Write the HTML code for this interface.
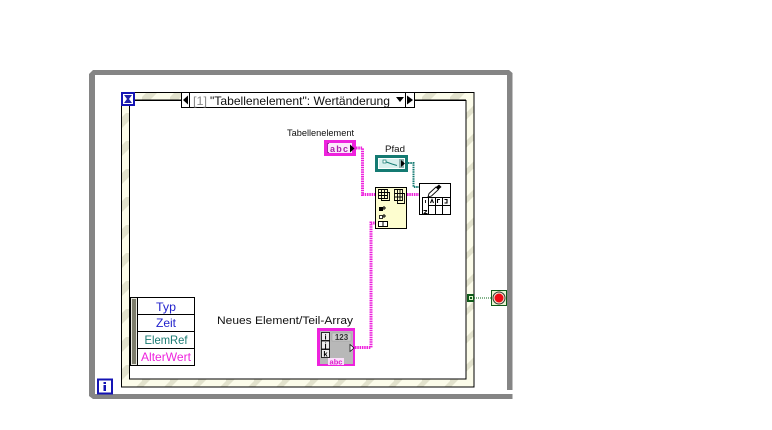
<!DOCTYPE html>
<html><head><meta charset="utf-8"><style>
html,body{margin:0;padding:0;background:#fff;width:772px;height:430px;overflow:hidden}
svg{display:block}
text{font-family:"Liberation Sans",sans-serif}
</style></head><body>
<svg width="772" height="430" viewBox="0 0 772 430" xmlns="http://www.w3.org/2000/svg">
<defs>
<pattern id="st" width="28" height="28" patternUnits="userSpaceOnUse" patternTransform="translate(2 1)">
<rect width="28" height="28" fill="#fcfcea"/>
<path d="M-4 16L16-4H27L-4 27ZM12 32L32 12V23L23 32Z" fill="#e2e2cc"/>
</pattern>
</defs>
<!-- while loop -->
<path d="M89 390V74L93 70H509L512.500 73V390H507V75H95V394H512.500V399H93L89 396Z" fill="#858585"/>
<!-- case frame -->
<rect x="121.500" y="92.500" width="352.500" height="294.500" fill="url(#st)" stroke="#000"/>
<rect x="129.500" y="100.500" width="336.500" height="278.500" fill="#fff" stroke="#000"/>
<!-- timeout -->
<rect x="121" y="92" width="14" height="14" fill="#1414b4"/>
<rect x="123" y="94" width="10" height="10" fill="#fff"/>
<path d="M124 95H132L129 99L132 103H124L127 99Z" fill="#2222aa"/>
<path d="M135 100H181" stroke="#000" fill="none"/>
<path d="M415 100H466" stroke="#000" fill="none"/>
<!-- selector -->
<rect x="181.500" y="92.500" width="233" height="15" fill="#fff" stroke="#000"/>
<path d="M189.500 92.500V107.500M405.500 92.500V107.500" stroke="#000"/>
<path d="M183 100L188 95.500V104.500Z" fill="#000"/>
<path d="M413 100L407 95.500V104.500Z" fill="#000"/>
<path d="M396 97H404L400 102Z" fill="#000"/>
<text x="193" y="105" font-size="12" fill="#8a8a8a" textLength="14" lengthAdjust="spacingAndGlyphs">[1]</text>
<text x="210" y="105" font-size="12" fill="#111" textLength="180" lengthAdjust="spacingAndGlyphs">"Tabellenelement": Wertänderung</text>
<!-- event data node -->
<rect x="130.500" y="297.500" width="64" height="68" fill="#fff" stroke="#000"/>
<rect x="131" y="298" width="6" height="67" fill="#e8e8e0"/>
<rect x="132" y="299" width="4" height="65" fill="#7d7d6c"/>
<path d="M137.500 297.500V365.500M137.500 314.500H194.500M137.500 331.500H194.500M137.500 348.500H194.500" stroke="#000" fill="none"/>
<text x="166" y="311" font-size="12" fill="#2222cc" text-anchor="middle" textLength="20" lengthAdjust="spacingAndGlyphs">Typ</text>
<text x="166" y="327" font-size="12" fill="#2222cc" text-anchor="middle" textLength="20" lengthAdjust="spacingAndGlyphs">Zeit</text>
<text x="166" y="344" font-size="12" fill="#1a7a72" text-anchor="middle" textLength="43" lengthAdjust="spacingAndGlyphs">ElemRef</text>
<text x="166" y="361" font-size="12" fill="#ee22dd" text-anchor="middle" textLength="50" lengthAdjust="spacingAndGlyphs">AlterWert</text>
<!-- iteration -->
<rect x="98" y="379.500" width="14" height="14" fill="#fff" stroke="#1414b4" stroke-width="2"/>
<rect x="103.500" y="382" width="2.500" height="2" fill="#1414b4"/>
<rect x="103.500" y="385" width="2.500" height="6" fill="#1414b4"/>
<!-- labels -->
<text x="287" y="136" font-size="9" fill="#111" textLength="67" lengthAdjust="spacingAndGlyphs">Tabellenelement</text>
<text x="385" y="152" font-size="9" fill="#111" textLength="20" lengthAdjust="spacingAndGlyphs">Pfad</text>
<text x="217" y="324" font-size="11" fill="#111" textLength="136" lengthAdjust="spacingAndGlyphs">Neues Element/Teil-Array</text>
<!-- wires -->
<path d="M356 148H362.500V194.500H375" fill="none" stroke="#ee22dd" stroke-width="3" stroke-dasharray="1.500 .8"/>
<path d="M407 194.500H419" fill="none" stroke="#ee22dd" stroke-width="3" stroke-dasharray="1.500 .8"/>
<path d="M355 347.500H371V223H376" fill="none" stroke="#ee22dd" stroke-width="3" stroke-dasharray="1.500 .8"/>
<path d="M408 163H413.500V187H419" fill="none" stroke="#147a72" stroke-width="2" stroke-dasharray="1.500 .8"/>
<path d="M474 298H491" fill="none" stroke="#0a6a1a" stroke-dasharray="1 1"/>
<!-- Tabellenelement control -->
<rect x="324" y="140" width="32" height="16" fill="#ee22dd"/>
<rect x="327" y="143" width="25" height="10" fill="#fbe8fb"/>
<text x="330" y="152" font-size="9" font-weight="bold" fill="#aa22aa" textLength="18">abc</text>
<path d="M329 143.500H327.500V152.500H329" fill="none" stroke="#aa22aa"/>
<path d="M350 144.500L354.500 148.500L350 152.500Z" fill="#000"/>
<!-- Pfad control -->
<rect x="375" y="155" width="33" height="17" fill="#147a72"/>
<rect x="378" y="158" width="27" height="11" fill="#fff"/>
<rect x="379" y="159" width="25" height="9" fill="#d8f0ee"/>
<rect x="399" y="159" width="5" height="9" fill="#8fb0ae"/>
<path d="M385 161.500L392 164L397 165.500" stroke="#147a72" fill="none"/>
<rect x="383" y="160" width="3" height="3" fill="#fff" stroke="#147a72" stroke-width=".7"/>
<path d="M401 160L405 163.500L401 167Z" fill="#000"/>
<!-- yellow node -->
<rect x="375.500" y="187.500" width="31" height="41" fill="#fdfdcf" stroke="#000"/>
<path d="M378.500 189.500H387.500V198.500H378.500ZM381.500 189.500V198.500M384.500 189.500V198.500M378.500 192.500H387.500M378.500 195.500H387.500M387.500 192.500H389.500V200.500H381.500V198.500" fill="none" stroke="#000" stroke-width=".9"/>
<path d="M394.500 189.500H402.500V200.500H394.500ZM397.500 189.500V200.500M400 189.500V200.500M394.500 193.500H402.500M394.500 197H402.500M402.500 193.500H404.500V203.500H397.500V200.500" fill="none" stroke="#000" stroke-width=".9"/>
<rect x="379" y="207" width="4" height="4" fill="#000"/>
<path d="M384 206V210M382.500 208H386" stroke="#000" fill="none"/>
<rect x="379.500" y="215.500" width="3" height="3" fill="#fff" stroke="#000" stroke-width=".8"/>
<path d="M384 214V218M382.500 216H386" stroke="#000" fill="none"/>
<rect x="378.500" y="221.500" width="9" height="5" fill="#fff" stroke="#000"/>
<path d="M383 221.500V226.500" stroke="#000"/>
<!-- table property node -->
<rect x="419.500" y="183.500" width="31" height="31" fill="#fff" stroke="#000"/>
<path d="M422.500 214.500V197.500H450.500M428.500 197.500V214.500M435.500 197.500V214.500M442.500 197.500V214.500M428.500 205.500H450.500" stroke="#000" fill="none"/>
<path d="M428 197L429 193.500L436 187L438.500 189.500L431.500 196Z" fill="#fff" stroke="#000" stroke-width=".9"/>
<path d="M436 187L439 184.500L441.500 187L438.500 189.500Z" fill="#000"/>
<path d="M430.500 203L432 199.500L433.500 203M437.500 203V199.500H440M444.500 199.500H447V203H444.500" stroke="#000" stroke-width="1.100" fill="none"/>
<path d="M425.500 200V203M423.500 210.500H427M427 210.500L424 213.500H427.500" stroke="#000" fill="none" stroke-width=".9"/>
<!-- cluster constant -->
<rect x="317" y="328" width="38" height="38" fill="#ee22dd"/>
<rect x="320" y="331" width="33" height="33" fill="#b8b8b8"/>
<rect x="321.500" y="332.500" width="8" height="8" fill="#eee" stroke="#000" stroke-width=".8"/>
<rect x="321.500" y="341" width="8" height="8" fill="#eee" stroke="#000" stroke-width=".8"/>
<rect x="321.500" y="349.500" width="8" height="8" fill="#eee" stroke="#000" stroke-width=".8"/>
<text x="325.500" y="339.500" font-size="7.500" font-weight="bold" text-anchor="middle" fill="#000">i</text>
<text x="325.500" y="348" font-size="7.500" font-weight="bold" text-anchor="middle" fill="#000">j</text>
<text x="325.500" y="356.500" font-size="7.500" font-weight="bold" text-anchor="middle" fill="#000">k</text>
<rect x="332" y="333" width="19" height="8" fill="#ccc" stroke="#999" stroke-width=".5"/>
<text x="341.500" y="340" font-size="8" font-weight="bold" text-anchor="middle" fill="#333">123</text>
<rect x="328" y="358" width="16" height="7" fill="#fbe0fb"/>
<text x="336" y="364.500" font-size="7.500" font-weight="bold" text-anchor="middle" fill="#dd22cc">abc</text>
<path d="M350 344.500L354 348L350 351.500Z" fill="#fff" stroke="#000" stroke-width=".7"/>
<!-- stop terminal -->
<rect x="467" y="294" width="7" height="8" fill="#0f5a1a"/>
<rect x="469" y="296" width="4" height="4" fill="#dff5c8"/>
<rect x="470" y="297" width="2" height="2" fill="#0f5a1a"/>
<rect x="491.500" y="290.500" width="15" height="15" fill="#e9f6d0" stroke="#0f5a1a"/>
<circle cx="499" cy="298" r="6" fill="#f5e9d0" stroke="#333" stroke-width="1"/>
<circle cx="499" cy="298" r="4.500" fill="#ee0a14"/>
</svg>
</body></html>
